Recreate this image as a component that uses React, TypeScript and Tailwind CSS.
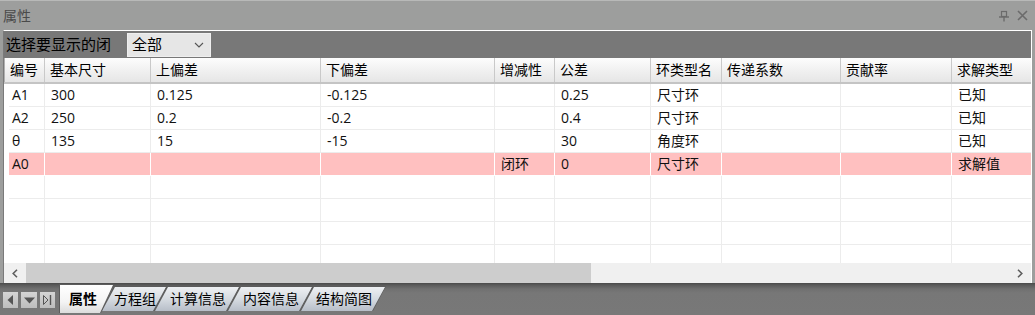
import React from 'react';

const headers = ['编号', '基本尺寸', '上偏差', '下偏差', '增减性', '公差', '环类型名', '传递系数', '贡献率', '求解类型'];
const hw = [40, 106, 170, 174, 60, 96, 71, 119, 111, 79];
const dw = [36, 106, 170, 174, 60, 96, 71, 119, 111, 79];

const rows: string[][] = [
  ['A1', '300', '0.125', '-0.125', '', '0.25', '尺寸环', '', '', '已知'],
  ['A2', '250', '0.2', '-0.2', '', '0.4', '尺寸环', '', '', '已知'],
  ['θ', '135', '15', '-15', '', '30', '角度环', '', '', '已知'],
  ['A0', '', '', '', '闭环', '0', '尺寸环', '', '', '求解值'],
  ['', '', '', '', '', '', '', '', '', ''],
  ['', '', '', '', '', '', '', '', '', ''],
  ['', '', '', '', '', '', '', '', '', ''],
  ['', '', '', '', '', '', '', '', '', ''],
];

function Tab({ label, width, active, first }: { label: string; width: number; active?: boolean; first?: boolean }) {
  const clip = first
    ? '[clip-path:polygon(0_0,100%_0,calc(100%-13px)_100%,0_100%)]'
    : '[clip-path:polygon(0_100%,13px_0,100%_0,calc(100%-13px)_100%)]';
  return (
    <div
      className={`relative shrink-0 ${first ? '' : '-ml-[13px]'} ${active ? 'z-10 h-[29px] mt-[1px]' : 'h-[25px] mt-[3px]'} bg-[#5c5c5c] ${clip}`}
      style={{ width }}
    >
      <div
        className={`absolute inset-x-[1px] top-[1px] bottom-0 ${clip} ${
          active
            ? 'bg-[linear-gradient(to_bottom,#ffffff,#f4f4f4_60%,#dcdcdc)]'
            : 'bg-[linear-gradient(to_bottom,#eef0f3,#d6dbe1_50%,#b7bec8)]'
        } flex items-center ${first ? 'pl-[9px]' : 'justify-center pl-[2px]'}`}
      >
        <span className={`text-[14px] leading-none text-black ${active ? 'font-bold' : ''}`}>{label}</span>
      </div>
    </div>
  );
}

export default function App() {
  return (
    <div className="w-[1035px] h-[315px] overflow-hidden bg-[#9d9e9d] flex flex-col font-['Open_Sans','Noto_Sans_CJK_SC',sans-serif] select-none">
      {/* title bar */}
      <div className="h-[30px] shrink-0 flex items-center justify-between pl-[3px] pr-[7px] border-t border-[#b8b9b8]">
        <span className="text-[14px] leading-none text-[#4a4a4a]">属性</span>
        <div className="flex items-center gap-[8px]">
          <svg width="10" height="12" viewBox="0 0 10 12">
            <rect x="2.5" y="1.5" width="5" height="5" fill="none" stroke="#6b6b6b" strokeWidth="1.2" />
            <line x1="0" y1="7" x2="10" y2="7" stroke="#6b6b6b" strokeWidth="1.4" />
            <line x1="5" y1="7" x2="5" y2="11.5" stroke="#6b6b6b" strokeWidth="1.4" />
          </svg>
          <svg width="11" height="11" viewBox="0 0 11 11">
            <path d="M1 1 L10 10 M10 1 L1 10" stroke="#6b6b6b" strokeWidth="1.6" />
          </svg>
        </div>
      </div>

      {/* frame */}
      <div className="mx-[3px] flex flex-col border-t border-l border-r border-t-white border-l-[#7a7a7a] border-r-white">
        {/* toolbar */}
        <div className="h-[27px] bg-[#787878] flex items-center pl-[2px]">
          <span className="text-[15px] leading-none text-black w-[121px]">选择要显示的闭</span>
          <div className="w-[84px] h-[24px] bg-[#e6e6e6] border border-[#efefef] flex items-center justify-between pl-[4px] pr-[6px]">
            <span className="text-[15px] leading-none text-black">全部</span>
            <svg width="10" height="6" viewBox="0 0 10 6">
              <path d="M1 1 L5 5 L9 1" fill="none" stroke="#555" strokeWidth="1.1" />
            </svg>
          </div>
        </div>

        {/* header */}
        <div className="h-[26px] flex bg-white border-b-2 border-[#c4c4c4]">
          <div className="w-[1px] bg-[#b0b0b0]" />
          {headers.map((h, i) => (
            <div
              key={h}
              className={`h-full flex items-center pl-[5px] shrink-0 bg-[linear-gradient(to_bottom,#fdfdfd,#f1f1f1_50%,#e6e6e6)] ${
                i < headers.length - 1 ? 'border-r border-[#c9c9c9]' : ''
              }`}
              style={{ width: hw[i] }}
            >
              <span className="text-[14px] leading-none text-black">{h}</span>
            </div>
          ))}
        </div>

        {/* body */}
        <div className="h-[179px] bg-white overflow-hidden">
          {rows.map((r, ri) => {
            const pink = r[0] === 'A0';
            return (
              <div key={ri} className="h-[23px] flex shrink-0">
                <div className="w-[5px] shrink-0 bg-white" />
                {r.map((c, ci) => (
                  <div
                    key={ci}
                    className={`h-full shrink-0 flex items-center border-b ${
                      ci < r.length - 1 ? 'border-r' : ''
                    } ${pink ? 'bg-[#ffc0c0] border-white' : 'bg-white border-[#ececec]'} ${
                      ci === 0 ? 'pl-[3px]' : 'pl-[6px]'
                    }`}
                    style={{ width: dw[ci] }}
                  >
                    <span className="text-[14px] leading-none text-[#111]">{c}</span>
                  </div>
                ))}
              </div>
            );
          })}
        </div>

        {/* horizontal scrollbar */}
        <div className="h-[20px] flex bg-[#f0f0f0]">
          <div className="w-[22px] shrink-0 flex items-center justify-center">
            <svg width="6" height="9" viewBox="0 0 6 9">
              <path d="M5 0.8 L1.2 4.5 L5 8.2" fill="none" stroke="#5e5e5e" strokeWidth="1.6" />
            </svg>
          </div>
          <div className="w-[565px] shrink-0 bg-[#cdcdcd]" />
          <div className="flex-1" />
          <div className="w-[22px] shrink-0 flex items-center justify-center">
            <svg width="6" height="9" viewBox="0 0 6 9">
              <path d="M1 0.8 L4.8 4.5 L1 8.2" fill="none" stroke="#5e5e5e" strokeWidth="1.6" />
            </svg>
          </div>
        </div>
      </div>

      {/* tab bar */}
      <div className="flex-1 flex items-start bg-[linear-gradient(to_bottom,#4a4a4a_0px,#5a5a5a_2px,#707070_6px,#777777_10px,#787878)]">
        <div className="flex items-center gap-[3px] pl-[3px] pt-[9px]">
          <div className="w-[15px] h-[16px] bg-[linear-gradient(to_bottom,#d4d4d4,#bdbdbd)] flex items-center justify-center">
            <svg width="7" height="10" viewBox="0 0 7 10">
              <path d="M6 0 L6 10 L0.5 5 Z" fill="#555" />
            </svg>
          </div>
          <div className="w-[16px] h-[16px] bg-[linear-gradient(to_bottom,#d4d4d4,#bdbdbd)] flex items-center justify-center">
            <svg width="11" height="7" viewBox="0 0 11 7">
              <path d="M0 0.5 L11 0.5 L5.5 6.5 Z" fill="#555" />
            </svg>
          </div>
          <div className="w-[15px] h-[16px] bg-[linear-gradient(to_bottom,#d4d4d4,#bdbdbd)] flex items-center justify-center">
            <svg width="9" height="10" viewBox="0 0 9 10">
              <path d="M0.5 0.5 L5 5 L0.5 9.5 Z" fill="none" stroke="#555" strokeWidth="1" />
              <line x1="7.5" y1="0" x2="7.5" y2="10" stroke="#555" strokeWidth="1.4" />
            </svg>
          </div>
        </div>
        <div className="flex items-start ml-[4px]">
          <Tab label="属性" width={55} active first />
          <Tab label="方程组" width={66} />
          <Tab label="计算信息" width={86} />
          <Tab label="内容信息" width={86} />
          <Tab label="结构简图" width={86} />
        </div>
      </div>
    </div>
  );
}
